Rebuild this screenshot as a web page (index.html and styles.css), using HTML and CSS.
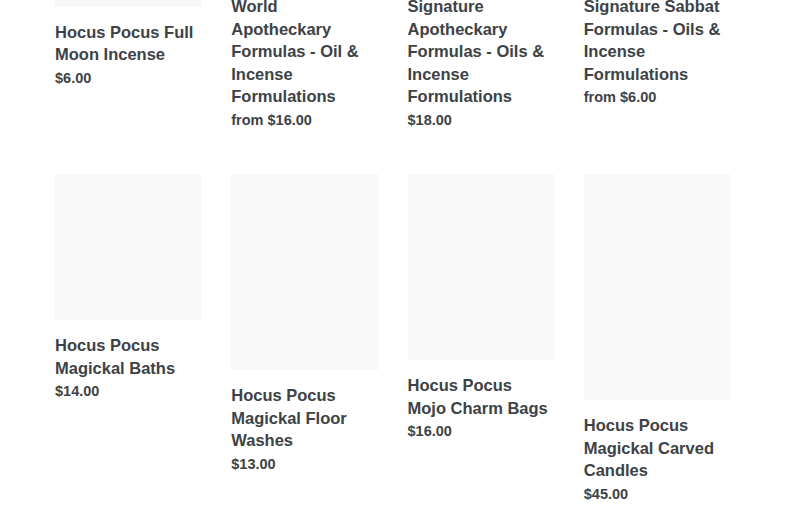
FILE: index.html
```html
<!DOCTYPE html>
<html lang="en">
<head>
<meta charset="utf-8">
<title>Collection</title>
<link rel="stylesheet" href="styles.css">
</head>
<body>
<main class="page">
  <ul class="grid">
    <li class="card">
      <div class="card__image h146"></div>
      <h3 class="card__title">Hocus Pocus Full Moon Incense</h3>
      <p class="card__price">$6.00</p>
    </li>
    <li class="card">
      <div class="card__image h98"></div>
      <h3 class="card__title">Hocus Pocus Old World Apotheckary Formulas - Oil &amp; Incense Formulations</h3>
      <p class="card__price">from $16.00</p>
    </li>
    <li class="card">
      <div class="card__image h98"></div>
      <h3 class="card__title">Hocus Pocus Signature Apotheckary Formulas - Oils &amp; Incense Formulations</h3>
      <p class="card__price">$18.00</p>
    </li>
    <li class="card">
      <div class="card__image h98"></div>
      <h3 class="card__title">Hocus Pocus Signature Sabbat Formulas - Oils &amp; Incense Formulations</h3>
      <p class="card__price">from $6.00</p>
    </li>

    <li class="card">
      <div class="card__image h146"></div>
      <h3 class="card__title">Hocus Pocus Magickal Baths</h3>
      <p class="card__price">$14.00</p>
    </li>
    <li class="card">
      <div class="card__image h196"></div>
      <h3 class="card__title">Hocus Pocus Magickal Floor Washes</h3>
      <p class="card__price">$13.00</p>
    </li>
    <li class="card">
      <div class="card__image h186"></div>
      <h3 class="card__title">Hocus Pocus Mojo Charm Bags</h3>
      <p class="card__price">$16.00</p>
    </li>
    <li class="card">
      <div class="card__image h226"></div>
      <h3 class="card__title">Hocus Pocus Magickal Carved Candles</h3>
      <p class="card__price">$45.00</p>
    </li>
  </ul>
</main>
</body>
</html>
```
FILE: styles.css
```css
html, body {
  margin: 0;
  padding: 0;
  background: #ffffff;
  overflow: hidden;
}

body {
  font-family: "Liberation Sans", Arial, Helvetica, sans-serif;
  color: #3d4246;
}

/* page is scrolled: the first row starts above the viewport */
.page {
  margin-top: -139.5px;
  padding: 0 55px;
}

.grid {
  list-style: none;
  margin: 0;
  padding: 0;
  display: grid;
  grid-template-columns: repeat(4, 1fr);
  column-gap: 30px;
  row-gap: 41.5px;
  align-items: start;
}

.card {
  display: flex;
  flex-direction: column;
}

.card__image {
  background: #f8f8f8;
  width: 100%;
}

.h98 { height: 98px; }
.h146 { height: 146px; }
.h186 { height: 186px; }
.h196 { height: 196px; }
.h226 { height: 226px; }

.card__title {
  margin: 14px 0 0;
  font-size: 16.5px;
  line-height: 22.5px;
  font-weight: 700;
  color: #3d4246;
}

.card__price {
  margin: 0;
  font-size: 14.5px;
  line-height: 25px;
  font-weight: 700;
  color: #3d4246;
}
```
